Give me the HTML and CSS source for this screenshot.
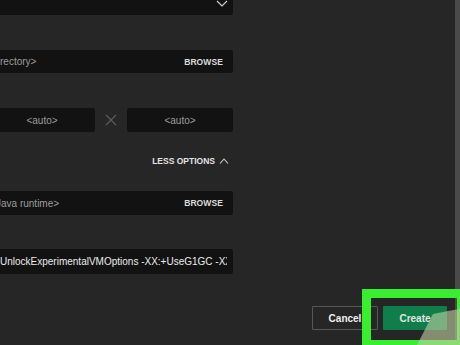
FILE: index.html
```html
<!DOCTYPE html>
<html lang="en">
<head>
  <meta charset="UTF-8">
  <meta name="viewport" content="width=device-width, initial-scale=1.0">
  <title>Installation settings</title>
  <link rel="stylesheet" href="styles.css">
</head>
<body>
  <div class="window">
    <main class="settings">
      <!-- Version dropdown (top cut off) -->
      <div class="select">
        <svg class="chevron" width="12" height="7" viewBox="0 0 12 7"><path d="M1 1 L6 6 L11 1" fill="none" stroke="#cfcfcf" stroke-width="1.2"/></svg>
      </div>

      <!-- Game directory -->
      <div class="field field-dir">
        <span class="placeholder">rectory&gt;</span>
        <span class="browse">BROWSE</span>
      </div>

      <!-- Resolution -->
      <div class="size-row">
        <div class="size-field size-width">&lt;auto&gt;</div>
        <svg class="times" width="12" height="12" viewBox="0 0 12 12"><path d="M1 1 L11 11 M11 1 L1 11" stroke="#5a5a5a" stroke-width="1.2"/></svg>
        <div class="size-field">&lt;auto&gt;</div>
      </div>

      <div class="options-toggle">
        <span>LESS OPTIONS</span>
        <svg width="10" height="6" viewBox="0 0 10 6"><path d="M1 5.5 L5 1 L9 5.5" fill="none" stroke="#cfcfcf" stroke-width="1.1"/></svg>
      </div>

      <!-- Java executable -->
      <div class="field field-java">
        <span class="placeholder java-text">Java runtime&gt;</span>
        <span class="browse">BROWSE</span>
      </div>

      <!-- JVM arguments -->
      <div class="field field-args">
        <span class="value">UnlockExperimentalVMOptions -XX:+UseG1GC -XX:G1NewSizePercent=20</span>
      </div>

      <div class="actions">
        <button class="btn btn-cancel">Cancel</button>
        <button class="btn btn-create">Create</button>
      </div>
    </main>
    <div class="scroll-edge"></div>

    <!-- annotation overlay -->
    <div class="highlight"></div>
    <svg class="hand" width="460" height="345" viewBox="0 0 460 345">
      <polygon points="417,345 433,314 448,311 460,309 460,345" fill="rgba(190,205,160,0.62)"/>
    </svg>
  </div>
</body>
</html>
```

FILE: styles.css
```css
body {
  margin: 0;
  padding: 0;
  background-color: #262626;
  font-family: "Liberation Sans", Arial, sans-serif;
  color: #e6e6e6;
  overflow: hidden;
}

.window {
  position: relative;
  display: flex;
  width: 460px;
  height: 345px;
  overflow: hidden;
}

.settings {
  flex: 1;
  display: flex;
  flex-direction: column;
}

.select {
  width: 233px;
  height: 24px;
  margin-top: -9px;
  background-color: #121212;
  border-radius: 0 0 2px 0;
  display: flex;
  justify-content: flex-end;
  align-items: flex-end;
  box-sizing: border-box;
  padding: 0 5px 8px 0;
}

.field {
  width: 233px;
  height: 24px;
  background-color: #121212;
  border-radius: 0 2px 2px 0;
  display: flex;
  align-items: center;
  box-sizing: border-box;
  padding-right: 10px;
  font-size: 10px;
}

.field-dir {
  margin-top: 35px;
  height: 23px;
}

.field-java {
  margin-top: 20px;
}

.field-args {
  margin-top: 34px;
  height: 25px;
  padding-right: 6px;
}

.placeholder {
  flex: 1;
  color: #9c9c9c;
  white-space: nowrap;
  overflow: hidden;
}

.java-text {
  text-indent: -4px;
}

.value {
  flex: 1;
  color: #ececec;
  white-space: nowrap;
  overflow: hidden;
}

.browse {
  font-size: 8.5px;
  font-weight: bold;
  color: #dcdcdc;
  letter-spacing: 0.1px;
}

.size-row {
  margin-top: 35px;
  width: 233px;
  display: flex;
  align-items: center;
}

.size-field {
  width: 106px;
  height: 24px;
  background-color: #121212;
  border-radius: 2px;
  display: flex;
  align-items: center;
  justify-content: center;
  font-size: 10px;
  color: #9c9c9c;
}

.size-width {
  margin-left: -11px;
}

.times {
  margin: 0 10px;
}

.options-toggle {
  margin-top: 19px;
  width: 233px;
  height: 20px;
  display: flex;
  justify-content: flex-end;
  align-items: center;
  gap: 4px;
  padding-right: 4px;
  box-sizing: border-box;
  font-size: 8.5px;
  font-weight: bold;
  color: #e2e2e2;
}

.actions {
  margin-top: auto;
  display: flex;
  justify-content: flex-end;
  gap: 5px;
  padding: 0 8px 15px 0;
}

.btn {
  height: 24px;
  font-family: "Liberation Sans", Arial, sans-serif;
  font-size: 10px;
  font-weight: bold;
  border-radius: 1px;
  cursor: pointer;
}

.btn-cancel {
  width: 66px;
  background: transparent;
  border: 1px solid #575757;
  color: #f0f0f0;
}

.btn-create {
  position: relative;
  width: 64px;
  background-color: #0f7e4b;
  border: none;
  color: #e4e4e4;
}

.scroll-edge {
  width: 5px;
  background-color: #4a4a4a;
}

.highlight {
  position: absolute;
  left: 362px;
  top: 289px;
  width: 100px;
  height: 60px;
  box-sizing: border-box;
  border: 9px solid #37ee2f;
  border-right-width: 5px;
  pointer-events: none;
}

.hand {
  position: absolute;
  left: 0;
  top: 0;
  pointer-events: none;
}
```
